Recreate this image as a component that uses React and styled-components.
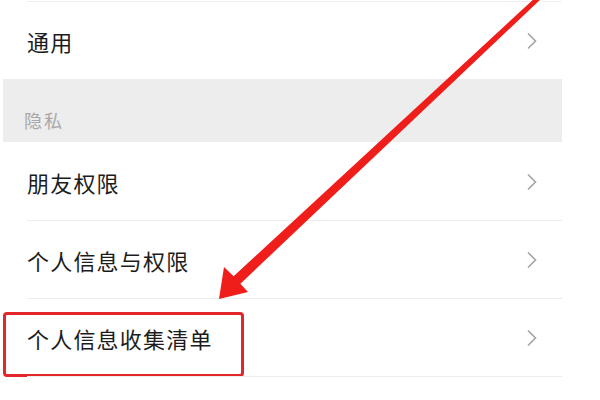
import React from "react";
import styled, { createGlobalStyle } from "styled-components";

const Global = createGlobalStyle`
  html, body { margin: 0; padding: 0; background: #ffffff; }
  body { font-family: "Noto Sans CJK SC", "Noto Sans", sans-serif; }
`;

const Stage = styled.div`
  position: relative;
  width: 600px;
  height: 400px;
  overflow: hidden;
  background: #ffffff;
`;

const List = styled.div`
  width: 559px;
  margin-left: 3px;
  padding-top: 1px;
  display: flex;
  flex-direction: column;
`;

const Divider = styled.div`
  height: 1px;
  margin-left: 24px;
  background: #efefef;
`;

const Row = styled.div`
  position: relative;
  box-sizing: border-box;
  height: ${(p) => p.$h}px;
  display: flex;
  align-items: center;
  justify-content: space-between;
  padding: 0 24px 0 24px;
  background: #ffffff;
  ${(p) =>
    p.$divider &&
    `
    &::after {
      content: "";
      position: absolute;
      left: 24px;
      right: 0;
      bottom: 0;
      height: 1px;
      background: #ececec;
    }
  `}
`;

const Label = styled.span`
  font-size: 22px;
  letter-spacing: 1.2px;
  color: #1c1c1c;
  line-height: 30px;
`;

const Section = styled.div`
  height: 63px;
  background: #ededed;
  display: flex;
  align-items: flex-end;
  padding: 0 0 10px 21px;
  box-sizing: border-box;
`;

const SectionTitle = styled.span`
  font-size: 18px;
  letter-spacing: 2px;
  color: #a8a8a8;
  line-height: 24px;
`;

const Highlight = styled.div`
  position: absolute;
  left: 0;
  top: 13px;
  width: 241px;
  height: 65px;
  box-sizing: border-box;
  border: 3px solid #e3262a;
  border-radius: 4px;
  pointer-events: none;
`;

const Overlay = styled.svg`
  position: absolute;
  left: 0;
  top: 0;
  pointer-events: none;
`;

const Chevron = () => (
  <svg width="12" height="18" viewBox="0 0 12 18">
    <path d="M2 1.5 L9.5 9 L2 16.5" fill="none" stroke="#a3a3a3" strokeWidth="1.6" />
  </svg>
);

const Item = ({ text, h = 78, divider = true, children }) => (
  <Row $h={h} $divider={divider}>
    <Label>{text}</Label>
    <Chevron />
    {children}
  </Row>
);

export default function App() {
  return (
    <>
      <Global />
      <Stage>
        <List>
          <Divider />
          <Item text="通用" h={77} divider={false} />
          <Section>
            <SectionTitle>隐私</SectionTitle>
          </Section>
          <Item text="朋友权限" h={79} />
          <Item text="个人信息与权限" />
          <Item text="个人信息收集清单">
            <Highlight />
          </Item>
        </List>
        <Overlay width="600" height="400" viewBox="0 0 600 400">
          <polygon
            fill="#f01e1a"
            points="536,-3 233.6,276.3 224,267 219,299 248,292 240.4,283.7 543,-3"
          />
        </Overlay>
      </Stage>
    </>
  );
}
